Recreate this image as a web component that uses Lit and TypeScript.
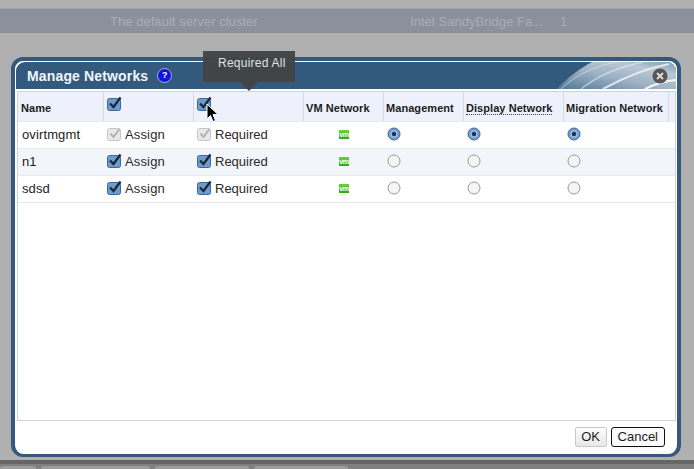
import { LitElement, html, css, svg } from 'lit';
import { customElement } from 'lit/decorators.js';

const NETWORKS = [
    { name: 'ovirtmgmt', locked: true, on: true },
    { name: 'n1', locked: false, on: false },
    { name: 'sdsd', locked: false, on: false },
];

const checkbox = (locked = false) => html`
    <svg class="check" width="16" height="16" viewBox="0 0 16 16">
        ${locked
            ? svg`<rect x="0.5" y="2.5" width="13" height="12" rx="2" fill="#e8e8e8" stroke="#c6c6c6"/>
                  <path d="M3.500 7.500l3 3.500 6-8" fill="none" stroke="#b2b2b2" stroke-width="2"/>`
            : svg`<rect x="0.5" y="2.500" width="13" height="12" rx="2" fill="#6b9bd2" stroke="#41688f"/>
                  <path d="M3 7.500l3.500 3.500 7-9.500" fill="none" stroke="#1d2530" stroke-width="2.200"/>`}
    </svg>`;

const radio = (on: boolean) => html`
    <svg class="radio" width="14" height="14" viewBox="0 0 14 14">
        ${on
            ? svg`<circle cx="7" cy="7" r="6" fill="#6f9fd6" stroke="#44688c"/>
                  <circle cx="7" cy="7" r="3.500" fill="#9cbfe6"/>
                  <circle cx="7" cy="7" r="2.200" fill="#27303a"/>`
            : svg`<circle cx="7" cy="7" r="6" fill="#f5f5f5" stroke="#999"/>`}
    </svg>`;

@customElement('app-root')
export class AppRoot extends LitElement {
    static styles = css`
        :host {
            display: flex;
            flex-direction: column;
            position: relative;
            width: 694px;
            height: 469px;
            overflow: hidden;
            background: #b0b0b0;
            font-family: 'Liberation Sans', Arial, sans-serif;
            font-size: 13px;
            color: #1c1c1c;
        }

        /* greyed page behind the dialog */
        .bg-row {
            display: flex;
            align-items: center;
            height: 25px;
            margin-top: 8px;
            padding-left: 110px;
            background: #8a919d;
            border-top: 1px solid #a2a2a2;
            box-sizing: border-box;
            color: #a9aeb6;
            letter-spacing: 0.04px;
        }
        .bg-desc { width: 300px; }
        .bg-cpu { width: 150px; }

        .bg-foot {
            margin-top: auto;
            height: 9px;
            border-top: 4px solid #666;
            background: #808080;
            display: flex;
            gap: 5px;
            box-sizing: border-box;
        }
        .bg-foot span {
            margin-top: 2px;
            background: #9c9c9c;
            border-radius: 3px 3px 0 0;
        }

        /* dialog */
        .dialog {
            position: absolute;
            left: 11px;
            top: 57px;
            width: 670px;
            height: 400px;
            box-sizing: border-box;
            display: flex;
            flex-direction: column;
            background: #fff;
            border: 4px solid #335a7c;
            border-bottom-width: 3px;
            border-radius: 12px;
        }
        .head {
            display: flex;
            align-items: center;
            gap: 9px;
            height: 27px;
            margin: 1px 1px 0;
            padding-left: 11px;
            flex: none;
            position: relative;
            overflow: hidden;
            background: #335a7c;
            border-radius: 9px 9px 0 0;
            color: #f2f5f8;
            font-size: 14px;
            font-weight: bold;
            letter-spacing: 0.15px;
        }
        .swoosh { position: absolute; right: 0; top: 0; }
        .help {
            width: 13px;
            height: 13px;
            border-radius: 50%;
            background: #1212e0;
            border: 1px solid #9fb6d8;
            color: #fff;
            font-size: 9px;
            line-height: 13px;
            text-align: center;
            position: relative;
        }
        .close { position: absolute; right: 8px; top: 6px; }

        .table {
            flex: 1;
            margin: 2px 1px 0 2px;
            border: 1px solid #c9d3dc;
            min-height: 0;
        }
        .row {
            display: grid;
            grid-template-columns: 86px 90px 110px 80px 80px 100px 105px 1fr;
            height: 24px;
            padding-bottom: 2px;
            align-items: center;
            border-bottom: 1px solid #e6e9ee;
        }
        .row.alt { background: #f2f5fa; }
        .row.header {
            box-sizing: border-box;
            height: 30px;
            padding-bottom: 0;
            background: #eef1fc;
            border-bottom: 1px solid #e3e8f2;
            font-size: 11px;
            font-weight: bold;
            letter-spacing: 0.06px;
        }
        .row.header > div {
            height: 100%;
            display: flex;
            align-items: center;
            box-sizing: border-box;
            padding: 3px 0 0 2px;
            border-right: 1px solid #d5dbe6;
        }
        .row.header > .first { padding-left: 3px; }
        .row.header > .cb { align-items: flex-start; padding: 4px 0 0 3px; }
        .row.header > .last { border-right: none; }
        .dotted { border-bottom: 1px dotted #444; line-height: 12px; }

        .name { padding-left: 4px; letter-spacing: 0.12px; }
        .cell { display: flex; align-items: center; padding-left: 3px; gap: 2px; }
        .cell.center { padding-left: 0; justify-content: center; }
        .check { flex: none; }
        .radio { display: block; }
        .label { color: #2b2b2b; }
        .label.wide { letter-spacing: 0.15px; }

        .vm {
            width: 10px;
            height: 9px;
            background: linear-gradient(#6bd63a, #2fa80f);
            color: #fff;
            font-size: 7px;
            font-weight: bold;
            letter-spacing: -0.3px;
            line-height: 9px;
            text-align: center;
        }

        .foot {
            flex: none;
            display: flex;
            justify-content: flex-end;
            gap: 4px;
            padding: 6px 12px 7px 0;
        }
        .btn {
            height: 20px;
            box-sizing: border-box;
            padding: 0 5.5px;
            font-size: 13px;
            line-height: 18px;
            border: 1px solid #c8c8c8;
            border-radius: 2px;
            background: linear-gradient(#fdfdfd, #e8e8e8);
        }
        .btn.focus { border-color: #111; border-radius: 3px; background: #fafafa; padding: 0 6px; }

        /* tooltip and cursor over the dialog */
        .tip {
            position: absolute;
            left: 203px;
            top: 51px;
            width: 92px;
            height: 31px;
            box-sizing: border-box;
            padding: 5px 0 0 15px;
            background: rgba(66, 69, 70, 0.96);
            color: #dfe1e2;
            font-size: 12px;
            letter-spacing: 0.25px;
        }
        .tip::after {
            content: '';
            position: absolute;
            left: 37px;
            top: 31px;
            border: 9px solid transparent;
            border-top-color: #424546;
            border-bottom: none;
        }
        .pointer { position: absolute; left: 206px; top: 103px; }
    `;

    render() {
        return html`
            <div class="bg-row">
                <span class="bg-desc">The default server cluster</span>
                <span class="bg-cpu">Intel SandyBridge Fa...</span>
                <span>1</span>
            </div>
            <div class="bg-foot">
                <span style="width:36px"></span>
                <span style="width:109px"></span>
                <span style="width:94px"></span>
                <span style="width:94px"></span>
            </div>

            <div class="dialog">
                <div class="head">
                    <svg class="swoosh" width="119" height="27" viewBox="0 0 119 27">
                        <defs>
                            <linearGradient id="sw" x1="0" y1="1" x2="1" y2="0">
                                <stop offset="0" stop-color="#4f7696"/>
                                <stop offset="0.45" stop-color="#9db2c4"/>
                                <stop offset="0.75" stop-color="#b9c8d5"/>
                                <stop offset="1" stop-color="#7f9ab2"/>
                            </linearGradient>
                        </defs>
                        <path d="M0 27C12 14 24 6 35 0H119V27Z" fill="url(#sw)"/>
                        <path d="M4 27C20 12 38 4 60 0" fill="none" stroke="#d8e2ea" stroke-width="1" opacity=".7"/>
                        <path d="M24 27C40 14 62 5 86 0" fill="none" stroke="#e6edf2" stroke-width="1.500" opacity=".6"/>
                        <path d="M46 27C66 16 86 7 112 2" fill="none" stroke="#eef3f7" stroke-width="2" opacity=".85"/>
                        <path d="M88 27C98 22 108 19 119 18" fill="none" stroke="#f4f7fa" stroke-width="2"/>
                    </svg>
                    <span>Manage Networks</span>
                    <span class="help">?</span>
                    <svg class="close" width="16" height="16" viewBox="0 0 16 16">
                        <circle cx="8" cy="8" r="7.500" fill="#555"/>
                        <path d="M5 5l6 6M11 5l-6 6" stroke="#dcdcdc" stroke-width="2"/>
                    </svg>
                </div>

                <div class="table">
                    <div class="row header">
                        <div class="first">Name</div>
                        <div class="cb">${checkbox()}</div>
                        <div class="cb">${checkbox()}</div>
                        <div>VM Network</div>
                        <div>Management</div>
                        <div><span class="dotted">Display Network</span></div>
                        <div>Migration Network</div>
                        <div class="last"></div>
                    </div>
                    ${NETWORKS.map((n, i) => html`
                        <div class="row ${i === 1 ? 'alt' : ''}">
                            <div class="name">${n.name}</div>
                            <div class="cell">${checkbox(n.locked)}<span class="label wide">Assign</span></div>
                            <div class="cell">${checkbox(n.locked)}<span class="label">Required</span></div>
                            <div class="cell center"><div class="vm">vm</div></div>
                            <div class="cell">${radio(n.on)}</div>
                            <div class="cell">${radio(n.on)}</div>
                            <div class="cell">${radio(n.on)}</div>
                            <div></div>
                        </div>
                    `)}
                </div>

                <div class="foot">
                    <span class="btn">OK</span>
                    <span class="btn focus">Cancel</span>
                </div>
            </div>

            <div class="tip">Required All</div>
            <svg class="pointer" width="13" height="20" viewBox="0 0 13 20">
                <path d="M1 1V16L4.500 12.500L7 18.500L9.500 17.500L7 11.500H12Z" fill="#000" stroke="#fff" stroke-width="1"/>
            </svg>
        `;
    }
}
